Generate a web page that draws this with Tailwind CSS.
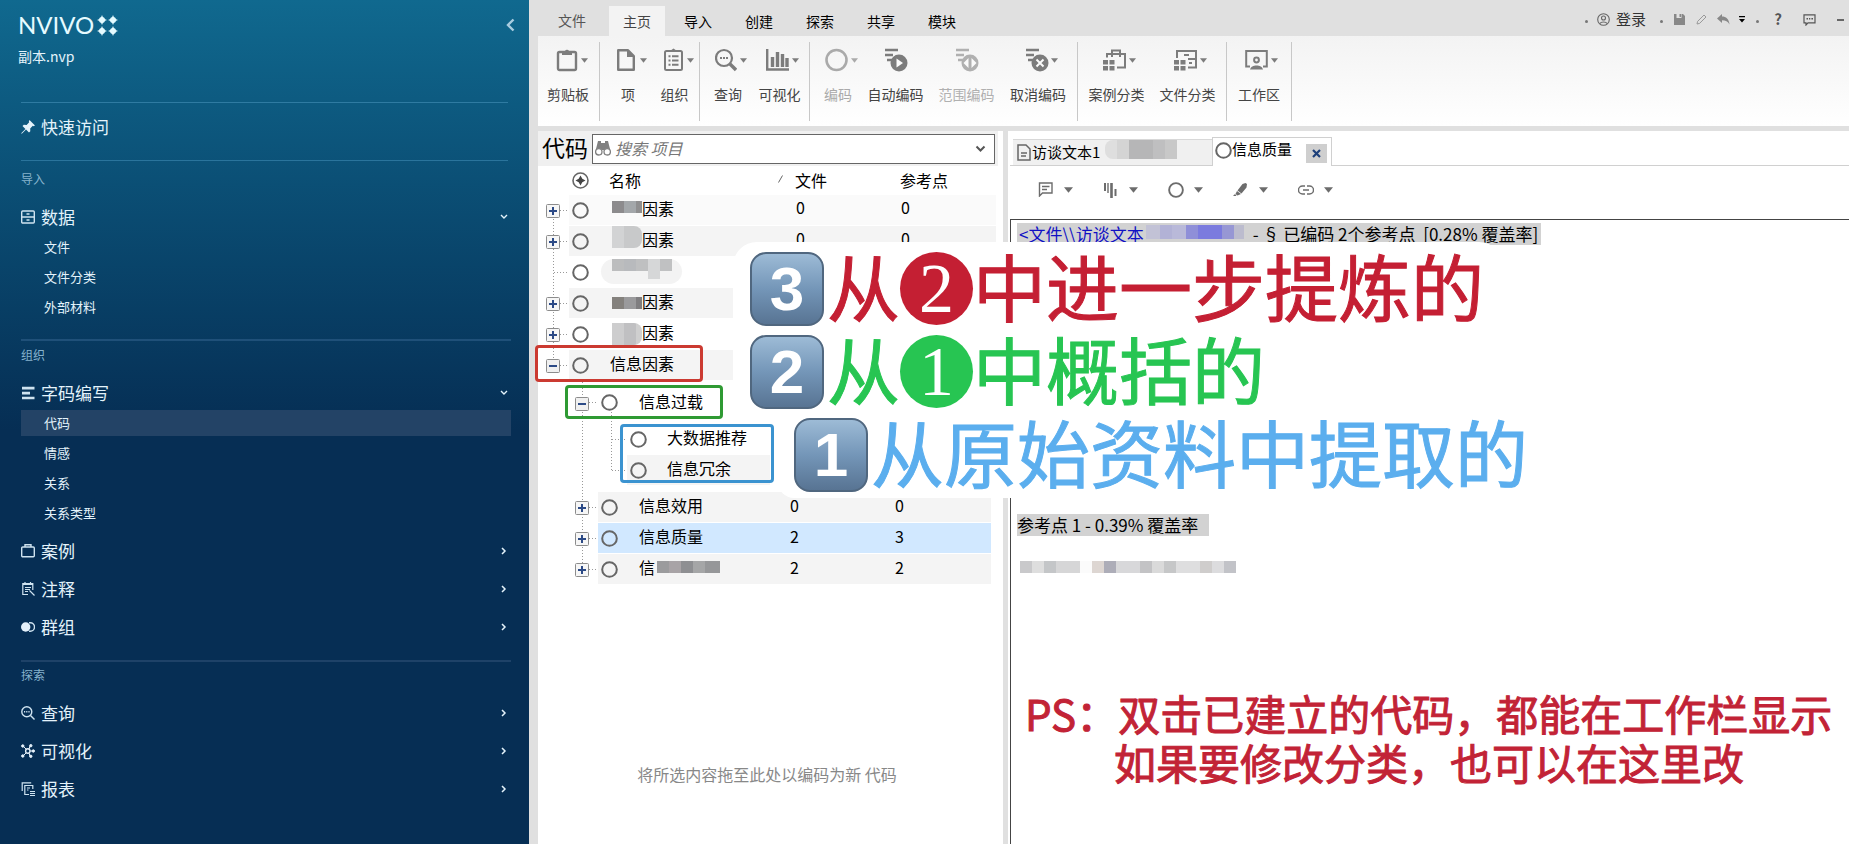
<!DOCTYPE html>
<html lang="zh-CN">
<head>
<meta charset="utf-8">
<title>NVivo - 副本.nvp</title>
<script src="https://cdn.jsdelivr.net/npm/@tailwindcss/browser@4"></script>
</head>
<body class="font-['Noto_Sans_CJK_SC',sans-serif] bg-white text-black">
<svg width="0" height="0" class="hidden">
  <symbol id="caret" viewBox="0 0 8 5"><path d="M0 0h8L4 5z" fill="currentColor"/></symbol>
  <symbol id="down" viewBox="0 0 8 6"><path d="M1 1l3 3 3-3" fill="none" stroke="currentColor" stroke-width="1.4"/></symbol>
  <symbol id="right" viewBox="0 0 6 8"><path d="M1 1l3 3-3 3" fill="none" stroke="currentColor" stroke-width="1.5"/></symbol>
  <symbol id="ring" viewBox="0 0 17 17"><circle cx="8.500" cy="8.500" r="7.300" fill="none" stroke="currentColor" stroke-width="2"/></symbol>
  <symbol id="plus" viewBox="0 0 14 14"><rect x=".5" y=".5" width="13" height="13" rx="1" fill="#f6f6f6" stroke="#8c8c8c"/><path d="M3 7h8M7 3v8" stroke="#2c4a86" stroke-width="2"/></symbol>
  <symbol id="minus" viewBox="0 0 14 14"><rect x=".5" y=".5" width="13" height="13" rx="1" fill="#f0f0f0" stroke="#8c8c8c"/><path d="M3 7h8" stroke="#2c4a86" stroke-width="2"/></symbol>
  <symbol id="lines" viewBox="0 0 24 24"><path d="M1 2h13M1 7h8M3 12h5" stroke="currentColor" stroke-width="2.600" fill="none"/></symbol>
</svg>

<div class="relative flex min-h-screen w-full overflow-hidden bg-[#e0e0e0]">

  <!-- Navigation -->
  <nav class="flex w-[529px] shrink-0 flex-col bg-linear-to-b from-[#10698f] to-[#062e54] to-[430px] pl-[21px] pr-[18px] text-[#e4f3fb]">
    <header class="flex h-[103px] items-start justify-between border-b border-[#2f7ba2] mr-[3px] pt-[13px]">
      <div class="-ml-[3px]">
        <div class="flex items-center gap-[3px] text-[24px] leading-[24px] text-[#e6fbff] font-['Lato',sans-serif]">NVIVO
          <svg width="21" height="21" viewBox="0 0 21 21" fill="#e6fbff"><g id="star"><path d="M5 0l1.500 3.500L10 5 6.500 6.500 5 10 3.500 6.500 0 5l3.500-1.500z"/></g><use href="#star" x="11"/><use href="#star" y="11"/><use href="#star" x="11" y="11"/><circle cx="5" cy="5" r="3"/><circle cx="16" cy="5" r="3"/><circle cx="5" cy="16" r="3"/><circle cx="16" cy="16" r="3"/></svg>
        </div>
        <div class="mt-[9px] text-[14px] leading-[20px]">副本.nvp</div>
      </div>
      <button aria-label="收起" class="mt-[5px] -mr-[7px] h-[14px] w-[9px]"><svg width="9" height="14" viewBox="0 0 9 14"><path d="M7.500 1.500L2 7l5.500 5.500" fill="none" stroke="#a9cde0" stroke-width="2.400"/></svg></button>
    </header>

    <div class="mr-[3px] flex h-[58px] items-start border-b border-[#2a749c] pt-[12px]">
      <a href="#" class="flex h-[24px] items-center gap-[6px] text-[17px]"><svg width="14" height="14" viewBox="0 0 14 14" fill="#e4f3fb"><path d="M8.500 0L14 5.500l-1.500.7-.7-.4-2.600 2.700.1 2.800-1.300 1.200L5 9.600.8 13.800l-.6-.6L4.400 9 1.500 6l1.300-1.200 2.800.1 2.600-2.600-.4-.8z"/></svg>快速访问</a>
    </div>

    <section class="h-[180px] border-b-2 border-[#1f5079]">
      <h2 class="pt-[9px] text-[12px] leading-[18px] text-[#86b3cd]">导入</h2>
      <a href="#" class="mt-[10px] flex h-[38px] items-center gap-[6px] text-[17px]"><svg width="14" height="14" viewBox="0 0 14 14" fill="none" stroke="#cfe3f0" stroke-width="1.400"><rect x=".7" y="1" width="12.600" height="12" rx="1"/><path d="M1 7h12M5.500 4h3M5.500 10h3"/></svg>数据<svg class="ml-auto mr-[3px]" width="8" height="6"><use href="#down"/></svg></a>
      <ul class="-mt-[4px] pl-[23px] text-[13px] leading-[30px]">
        <li><a href="#">文件</a></li><li><a href="#">文件分类</a></li><li><a href="#">外部材料</a></li>
      </ul>
    </section>

    <section class="h-[321px] border-b-2 border-[#1e4268]">
      <h2 class="pt-[5px] text-[12px] leading-[18px] text-[#86b3cd]">组织</h2>
      <a href="#" class="mt-[10px] flex h-[38px] items-center gap-[6px] text-[17px]"><svg width="14" height="14" viewBox="0 0 14 14" fill="#cfe3f0"><path d="M1 .8h12.500v2.600H1zM1 5.800h8v2.600H1zM1 10.800h12.500v2.400H1z"/></svg>字码编写<svg class="ml-auto mr-[3px]" width="8" height="6"><use href="#down"/></svg></a>
      <ul class="-mt-[4px] text-[13px] leading-[26px]">
        <li class="my-[2px] bg-[#234366] pl-[23px]"><a href="#" aria-current="page">代码</a></li>
        <li class="my-[4px] pl-[23px]"><a href="#">情感</a></li>
        <li class="my-[4px] pl-[23px]"><a href="#">关系</a></li>
        <li class="mt-[4px] pl-[23px]"><a href="#">关系类型</a></li>
      </ul>
      <a href="#" class="mt-[6px] flex h-[38px] items-center gap-[6px] text-[17px]"><svg width="14" height="14" viewBox="0 0 14 14" fill="none" stroke="#cfe3f0" stroke-width="1.400"><rect x=".7" y="3" width="12.600" height="9.800" rx="1"/><path d="M4 3V.8h6V3"/></svg>案例<svg class="ml-auto mr-[4px]" width="6" height="8"><use href="#right"/></svg></a>
      <a href="#" class="flex h-[38px] items-center gap-[6px] text-[17px]"><svg width="14" height="14" viewBox="0 0 14 14" fill="none" stroke="#cfe3f0" stroke-width="1.200"><path d="M7 12.500H1.800v-11h10V8M1.800 2.500h10M4 0v3M9.500 0v3M4 5.500h6M4 7.500h5M4 9.500h3M8.500 8.500l5 5"/></svg>注释<svg class="ml-auto mr-[4px]" width="6" height="8"><use href="#right"/></svg></a>
      <a href="#" class="flex h-[38px] items-center gap-[6px] text-[17px]"><svg width="14" height="14" viewBox="0 0 14 14"><circle cx="4.700" cy="7" r="4.700" fill="#e4f0fa"/><path d="M8 2.800h1.300a4.200 4.200 0 0 1 0 8.400H8" fill="none" stroke="#cfe3f0" stroke-width="1.400"/></svg>群组<svg class="ml-auto mr-[4px]" width="6" height="8"><use href="#right"/></svg></a>
    </section>

    <section>
      <h2 class="pt-[4px] text-[12px] leading-[18px] text-[#86b3cd]">探索</h2>
      <a href="#" class="mt-[10px] flex h-[38px] items-center gap-[6px] text-[17px]"><svg width="14" height="14" viewBox="0 0 14 14" fill="none" stroke="#cfe3f0" stroke-width="1.400"><circle cx="5.800" cy="5.800" r="5"/><path d="M9.500 9.500l4 4"/><path d="M3 5.800h1.200M5.200 5.800h1.200M7.400 5.800h1.200"/></svg>查询<svg class="ml-auto mr-[4px]" width="6" height="8"><use href="#right"/></svg></a>
      <a href="#" class="flex h-[38px] items-center gap-[6px] text-[17px]"><svg width="14" height="14" viewBox="0 0 14 14" fill="#e4f0fa" stroke="#e4f0fa"><path d="M2 2l3 3M9 2L8 5M12 7H9M2 12l3-3M9 12L8 9" /><circle cx="6.800" cy="7" r="2.200" fill="none" stroke-width="1.400"/><circle cx="1.800" cy="2" r="1.200"/><circle cx="9.800" cy="1.700" r="1.200"/><circle cx="12.300" cy="7" r="1.200"/><circle cx="1.800" cy="12" r="1.200"/><circle cx="9.800" cy="12.300" r="1.200"/></svg>可视化<svg class="ml-auto mr-[4px]" width="6" height="8"><use href="#right"/></svg></a>
      <a href="#" class="flex h-[38px] items-center gap-[6px] text-[17px]"><svg width="14" height="14" viewBox="0 0 14 14" fill="none" stroke="#cfe3f0" stroke-width="1.200"><path d="M1.200 9V.8h9M8 12.500H3.800v-9h8V7M6 6h3M6 8h1.500M9 9.500h5M9 11.500h5M9 13.500h5"/></svg>报表<svg class="ml-auto mr-[4px]" width="6" height="8"><use href="#right"/></svg></a>
    </section>
  </nav>

  <div class="flex min-w-0 flex-1 flex-col pl-[9px]">
    <!-- Tab strip -->
    <header class="flex h-[36px] items-end text-[14px]">
      <button class="h-[30px] w-[68px] pb-[2px] text-[#555]">文件</button>
      <button class="ml-[3px] h-[30px] w-[56px] bg-[#f3f3f3] text-[#444]">主页</button>
      <button class="h-[30px] w-[66px]">导入</button>
      <button class="h-[30px] w-[56px]">创建</button>
      <button class="ml-[5px] h-[30px] w-[56px]">探索</button>
      <button class="ml-[5px] h-[30px] w-[56px]">共享</button>
      <button class="ml-[5px] h-[30px] w-[56px]">模块</button>
      <div class="ml-auto flex h-[30px] items-center pr-[5px] pb-[3px] text-[#777]">
        <span class="mt-[3px] size-[3px] rounded-full bg-[#777]"></span>
        <button class="ml-[9px] flex items-center gap-[6px] text-[15px] text-[#333]"><svg width="13" height="13" viewBox="0 0 13 13" fill="none" stroke="#666" stroke-width="1.100"><circle cx="6.500" cy="6.500" r="5.800"/><circle cx="6.500" cy="5" r="2"/><path d="M3 10.500c1-2 6-2 7 0"/></svg>登录</button>
        <span class="mt-[3px] ml-[14px] size-[3px] rounded-full bg-[#777]"></span>
        <button aria-label="保存" class="ml-[11px]"><svg width="11" height="11" viewBox="0 0 11 11" fill="#888"><path d="M0 0h2.500v4h5V0H9l2 2v9H0zM5.500 0h1.500v3H5.500z"/></svg></button>
        <button aria-label="编辑" class="ml-[11px]"><svg width="11" height="11" viewBox="0 0 11 11" fill="none" stroke="#999"><path d="M1 10l.6-2.600L8 1l2 2-6.400 6.400z"/></svg></button>
        <button aria-label="撤销" class="ml-[10px]"><svg width="13" height="11" viewBox="0 0 13 11" fill="#888"><path d="M5 0v2.600c4 0 7 2.400 7.500 8C11 7.500 8.500 6.300 5 6.300V9L0 4.500z"/></svg></button>
        <button aria-label="更多" class="ml-[9px]"><svg width="6" height="7" viewBox="0 0 6 7"><path d="M0 0h6v1.300H0zM0 3h6L3 6.500z" fill="#000"/></svg></button>
        <span class="mt-[3px] ml-[11px] size-[3px] rounded-full bg-[#777]"></span>
        <button class="ml-[14px] w-[10px] text-[15px] font-bold text-[#555]">?</button>
        <button aria-label="反馈" class="ml-[20px]"><svg width="13" height="12" viewBox="0 0 13 12" fill="none" stroke="#555" stroke-width="1.200"><path d="M1 .8h11v8H5L3 11V8.800H1z"/><path d="M3.500 4.800H5M6 4.800h1.300M8.400 4.800H10" stroke-width="1.600"/></svg></button>
        <button aria-label="最小化" class="ml-[21px] h-[2px] w-[7px] bg-[#666]"></button>
      </div>
    </header>

    <!-- Ribbon -->
    <div class="flex h-[90px] bg-linear-to-b from-[#f3f3f3] to-white pt-[6px] pb-[5px] text-[14px] leading-[20px] text-[#444]">
      <div class="flex border-r border-[#c8c8c8] pr-px">
        <button class="flex w-[60px] flex-col items-center pt-[6px]"><span class="flex h-[24px] items-center gap-[3px] pl-[8px] text-[#7c7c7c]"><svg width="22" height="24" viewBox="0 0 22 24"><rect x="2" y="4" width="18" height="18" rx="1.500" fill="none" stroke="currentColor" stroke-width="2.400"/><path d="M6 3h3a2.200 2.200 0 0 1 4 0h3v4H6z" fill="currentColor"/></svg><svg width="7" height="5"><use href="#caret"/></svg></span><span class="mt-[12px]">剪贴板</span></button>
      </div>
      <div class="flex border-r border-[#c8c8c8] pl-[6px]">
        <button class="flex w-[44px] flex-col items-center pt-[6px]"><span class="flex h-[24px] items-center gap-[5px] pl-[8px] text-[#7c7c7c]"><svg width="18" height="24" viewBox="0 0 18 24"><path d="M1.200 2.200h9.600l6 6v13.600H1.200z" fill="none" stroke="currentColor" stroke-width="2.400" stroke-linejoin="round"/><path d="M10 2l7 7h-7z" fill="currentColor"/></svg><svg width="7" height="5"><use href="#caret"/></svg></span><span class="mt-[12px]">项</span></button>
        <button class="flex w-[49px] flex-col items-center pt-[6px]"><span class="flex h-[24px] items-center gap-[4px] pl-[8px] text-[#7c7c7c]"><svg width="19" height="24" viewBox="0 0 19 24"><rect x="1" y="3" width="17" height="19" rx="1.500" fill="none" stroke="currentColor" stroke-width="2"/><path d="M6 3l3.500-2.500L13 3z" fill="currentColor"/><path d="M4.500 8.200h2M8 8.200h6.500M4.500 12.500h2M8 12.500h6.500M4.500 16.800h2M8 16.800h6.500" stroke="currentColor" stroke-width="2"/></svg><svg width="7" height="5"><use href="#caret"/></svg></span><span class="mt-[12px]">组织</span></button>
      </div>
      <div class="flex border-r border-[#c8c8c8] pl-[6px]">
        <button class="flex w-[44px] flex-col items-center pt-[6px]"><span class="flex h-[24px] items-center gap-[3px] pl-[6px] text-[#7c7c7c]"><svg width="22" height="24" viewBox="0 0 22 24"><circle cx="9" cy="10" r="8" fill="none" stroke="currentColor" stroke-width="2.200"/><path d="M15 16l6 6" stroke="currentColor" stroke-width="3.400"/><path d="M5 10h2M8 10h2M11 10h2" stroke="currentColor" stroke-width="2"/></svg><svg width="7" height="5"><use href="#caret"/></svg></span><span class="mt-[12px]">查询</span></button>
        <button class="flex w-[59px] flex-col items-center pt-[6px]"><span class="flex h-[24px] items-center gap-[3px] pl-[6px] text-[#7c7c7c]"><svg width="23" height="24" viewBox="0 0 23 24"><path d="M1.200 1v20.500H23" fill="none" stroke="currentColor" stroke-width="2.400"/><path d="M6.500 9v10M11.500 4v15M16.500 6v13M21 10v9" stroke="currentColor" stroke-width="3.400"/></svg><svg width="7" height="5"><use href="#caret"/></svg></span><span class="mt-[12px]">可视化</span></button>
      </div>
      <div class="flex border-r border-[#c8c8c8] pl-[6px] pr-[3px]">
        <button class="flex w-[44px] flex-col items-center pt-[6px] text-[#aaa]" disabled><span class="flex h-[24px] items-center gap-[3px] pl-[6px]"><svg width="23" height="24" viewBox="0 0 23 24"><circle cx="11.500" cy="12" r="10" fill="none" stroke="currentColor" stroke-width="2.600"/></svg><svg width="7" height="5"><use href="#caret"/></svg></span><span class="mt-[12px]">编码</span></button>
        <button class="flex w-[71px] flex-col items-center pt-[6px]"><span class="flex h-[24px] items-center text-[#7c7c7c]"><svg width="24" height="24" viewBox="0 0 24 24"><use href="#lines"/><circle cx="15" cy="15" r="8.500" fill="currentColor"/><path d="M12.500 10.500v9l6.500-4.500z" fill="#fafafa"/></svg></span><span class="mt-[12px]">自动编码</span></button>
        <button class="flex w-[71px] flex-col items-center pt-[6px] text-[#b0b0b0]" disabled><span class="flex h-[24px] items-center"><svg width="24" height="24" viewBox="0 0 24 24"><use href="#lines"/><circle cx="15" cy="15" r="8.500" fill="currentColor"/><path d="M13.500 10v10l-5-5zM16.500 10v10l5-5z" fill="#fafafa"/></svg></span><span class="mt-[12px]">范围编码</span></button>
        <button class="flex w-[72px] flex-col items-center pt-[6px]"><span class="flex h-[24px] items-center gap-[2px] pl-[6px] text-[#7c7c7c]"><svg width="24" height="24" viewBox="0 0 24 24"><use href="#lines"/><circle cx="15" cy="15" r="8.500" fill="currentColor"/><path d="M11.500 11.500l7 7M18.500 11.500l-7 7" stroke="#fafafa" stroke-width="2"/></svg><svg width="7" height="5"><use href="#caret"/></svg></span><span class="mt-[12px]">取消编码</span></button>
      </div>
      <div class="flex border-r border-[#c8c8c8] px-[3px]">
        <button class="flex w-[71px] flex-col items-center pt-[6px]"><span class="flex h-[24px] items-center gap-[3px] pl-[6px] text-[#7c7c7c]"><svg width="23" height="24" viewBox="0 0 23 24"><path d="M4 9.500V6h18v13.500h-8M9 6V2.500h8V6M9 6v3M17 6v3" fill="none" stroke="currentColor" stroke-width="2"/><path d="M0 12h5v4.500H0zM6.500 12h5v4.500h-5zM0 18h5v4.500H0zM6.500 18h5v4.500h-5z" fill="currentColor"/></svg><svg width="7" height="5"><use href="#caret"/></svg></span><span class="mt-[12px]">案例分类</span></button>
        <button class="flex w-[71px] flex-col items-center pt-[6px]"><span class="flex h-[24px] items-center gap-[3px] pl-[6px] text-[#7c7c7c]"><svg width="23" height="24" viewBox="0 0 23 24"><path d="M3 10V3h19v16.500h-8M14 11h8M10 7h5M15 15h3" fill="none" stroke="currentColor" stroke-width="2"/><path d="M0 12h5v4.500H0zM6.500 12h5v4.500h-5zM0 18h5v4.500H0zM6.500 18h5v4.500h-5z" fill="currentColor"/></svg><svg width="7" height="5"><use href="#caret"/></svg></span><span class="mt-[12px]">文件分类</span></button>
      </div>
      <div class="flex border-r border-[#c8c8c8]">
        <button class="flex w-[64px] flex-col items-center pt-[6px]"><span class="flex h-[24px] items-center gap-[3px] pl-[4px] text-[#7c7c7c]"><svg width="23" height="24" viewBox="0 0 23 24"><path d="M5 18.500H1.200V3h20.600v15.500H18" fill="none" stroke="currentColor" stroke-width="2"/><circle cx="11.500" cy="12" r="2.400" fill="none" stroke="currentColor" stroke-width="2"/><path d="M5 21.500c1-5.500 12-5.500 13 0z" fill="currentColor"/></svg><svg width="7" height="5"><use href="#caret"/></svg></span><span class="mt-[12px]">工作区</span></button>
      </div>
    </div>

    <div class="mt-[5px] flex flex-1">
      <!-- Codes list -->
      <main class="flex w-[465px] shrink-0 flex-col bg-white">
        <div class="mr-[5px] flex h-[35px] items-center bg-[#f0f0f0] pl-[4px]">
          <h1 class="pb-[4px] text-[23px] leading-[30px]">代码</h1>
          <div class="ml-[4px] flex h-[30px] flex-1 items-center border border-[#666] bg-white pl-[2px] pr-[8px] mr-[3px]">
            <svg width="16" height="15" viewBox="0 0 16 15" fill="#808080"><path d="M3 0h3v2h4V0h3l2 8v1H1V8z"/><circle cx="3.800" cy="10.800" r="3.200" fill="#fff" stroke="#808080" stroke-width="1.300"/><circle cx="12.200" cy="10.800" r="3.200" fill="#fff" stroke="#808080" stroke-width="1.300"/></svg>
            <input type="text" aria-label="搜索 项目" placeholder="搜索 项目" class="ml-[4px] mb-[2px] min-w-0 flex-1 bg-transparent text-[16px] italic outline-none placeholder:text-[#777]">
            <button aria-label="展开"><svg width="11" height="8" viewBox="0 0 11 8"><path d="M1.500 1.500l4 4 4-4" fill="none" stroke="#555" stroke-width="2"/></svg></button>
          </div>
        </div>

        <div class="relative">
          <svg class="absolute top-0 left-0" width="100" height="420" fill="none" stroke="#999" stroke-dasharray="1 2"><path d="M15.500 44v156M22 44.500h9M22 75.500h9M16 106.500h15M22 137.500h9M22 168.500h9M22 199.500h9M44.500 216v188M51 236.500h9M51 341.500h9M51 372.500h9M51 403.500h9M73.500 246v59M74 273.500h15M74 304.500h15"/></svg>
          <table class="relative w-[458px] table-fixed border-collapse text-left text-[16px] leading-[24px]">
            <colgroup><col class="w-[252px]"><col class="w-[105px]"><col></colgroup>
            <thead><tr class="h-[29px] align-middle">
              <th class="font-normal p-0"><div class="flex items-center pl-[34px]"><svg width="17" height="17" viewBox="0 0 17 17"><circle cx="8.500" cy="8.500" r="7.500" fill="none" stroke="#666" stroke-width="1.600"/><path d="M8.500 3.500L10.300 6.700 13.500 8.500 10.300 10.300 8.500 13.500 6.700 10.300 3.500 8.500 6.700 6.700z" fill="#444"/></svg><span class="ml-[20px] mb-[2px]">名称</span><svg class="ml-auto mb-[4px] mr-[7px]" width="5" height="8" viewBox="0 0 5 8"><path d="M.5 7.500l4-7" stroke="#666"/></svg></div></th>
              <th class="font-normal p-0 pb-[2px] pl-[5px]">文件</th>
              <th class="font-normal p-0 pb-[2px] pl-[5px]">参考点</th>
            </tr></thead>
            <tbody>
              <tr class="h-[31px]"><td class="p-0 pb-px"><div class="flex h-[30px]"><button aria-label="展开" class="ml-[8px] mr-[9px] mt-[2px]"><svg width="14" height="14"><use href="#plus"/></svg></button><div class="flex flex-1 items-center bg-[#fafafa] pl-[3px]"><svg width="17" height="17" class="text-[#666]"><use href="#ring"/></svg><span class="ml-[23px] mb-[6px] flex h-[12px]"><i class="w-[12px] bg-[#8c8b8d]"></i><i class="w-[12px] bg-[#a3a7aa]"></i><i class="w-[6px] bg-[#8f8f90]"></i></span><span class="mb-[4px]">因素</span></div></div></td><td class="p-0 pb-px"><div class="h-[30px] bg-[#fafafa] pl-[6px]">0</div></td><td class="p-0 pb-px"><div class="h-[30px] bg-[#fafafa] pl-[6px]">0</div></td></tr>
              <tr class="h-[31px]"><td class="p-0 pb-px"><div class="flex h-[30px]"><button aria-label="展开" class="ml-[8px] mr-[9px] mt-[2px]"><svg width="14" height="14"><use href="#plus"/></svg></button><div class="flex flex-1 items-center bg-[#f4f4f4] pl-[3px]"><svg width="17" height="17" class="text-[#666]"><use href="#ring"/></svg><span class="ml-[23px] mb-[8px] flex h-[22px] overflow-hidden rounded-r-lg"><i class="w-[12px] bg-[#d2d3d4]"></i><i class="w-[18px] bg-[#c8c9ca]"></i></span><span class="mb-[4px]">因素</span></div></div></td><td class="p-0 pb-px"><div class="h-[30px] bg-[#f4f4f4] pl-[6px]">0</div></td><td class="p-0 pb-px"><div class="h-[30px] bg-[#f4f4f4] pl-[6px]">0</div></td></tr>
              <tr class="h-[31px]"><td class="p-0 pb-px"><div class="flex h-[30px]"><div class="flex flex-1 items-center pl-[34px]"><svg width="17" height="17" class="text-[#666]"><use href="#ring"/></svg><span class="ml-[12px] mb-[2px] flex h-[25px] items-start rounded-full bg-[#f3f3f3] pr-[10px] pl-[11px]"><i class="h-[12px] w-[12px] bg-[#bcbdbe]"></i><i class="h-[12px] w-[12px] bg-[#b8babd]"></i><i class="h-[12px] w-[12px] bg-[#bfc0c1]"></i><i class="h-[20px] w-[12px] bg-[#d6d7d8]"></i><i class="h-[12px] w-[12px] bg-[#c0c1c2]"></i></span></div></div></td><td class="p-0"></td><td class="p-0"></td></tr>
              <tr class="h-[31px]"><td class="p-0 pb-px"><div class="flex h-[30px]"><button aria-label="展开" class="ml-[8px] mr-[9px] mt-[2px]"><svg width="14" height="14"><use href="#plus"/></svg></button><div class="flex flex-1 items-center bg-[#f4f4f4] pl-[3px]"><svg width="17" height="17" class="text-[#666]"><use href="#ring"/></svg><span class="ml-[23px] flex h-[12px]"><i class="w-[12px] bg-[#84817d]"></i><i class="w-[12px] bg-[#9a9a9c]"></i><i class="w-[6px] bg-[#7f7e80]"></i></span><span class="mb-[4px]">因素</span></div></div></td><td class="p-0"></td><td class="p-0"></td></tr>
              <tr class="h-[31px]"><td class="p-0 pb-px"><div class="flex h-[30px]"><button aria-label="展开" class="ml-[8px] mr-[9px] mt-[2px]"><svg width="14" height="14"><use href="#plus"/></svg></button><div class="flex flex-1 items-center pl-[3px]"><svg width="17" height="17" class="text-[#666]"><use href="#ring"/></svg><span class="ml-[23px] flex h-[22px] overflow-hidden rounded-r-lg"><i class="w-[12px] bg-[#cdcdce]"></i><i class="w-[12px] bg-[#c0c0c2]"></i><i class="w-[6px] bg-[#cfcfcf]"></i></span><span class="mb-[4px]">因素</span></div></div></td><td class="p-0"></td><td class="p-0"></td></tr>
              <tr class="h-[31px]"><td class="p-0 pb-px"><div class="flex h-[30px]"><button aria-label="折叠" class="ml-[8px] mr-[9px] mt-[2px]"><svg width="14" height="14"><use href="#minus"/></svg></button><div class="flex flex-1 items-center bg-[#f4f4f4] pl-[3px]"><svg width="17" height="17" class="text-[#666]"><use href="#ring"/></svg><span class="ml-[21px] mb-[4px]">信息因素</span></div></div></td><td class="p-0"></td><td class="p-0"></td></tr>
              <tr class="h-[43px]"><td class="p-0"><div class="flex h-[30px] pl-[29px]"><button aria-label="折叠" class="ml-[8px] mr-[9px] mt-[2px]"><svg width="14" height="14"><use href="#minus"/></svg></button><div class="flex flex-1 items-center pl-[3px]"><svg width="17" height="17" class="text-[#666]"><use href="#ring"/></svg><span class="ml-[21px] mb-[4px]">信息过载</span></div></div></td><td class="p-0"></td><td class="p-0"></td></tr>
              <tr class="h-[31px]"><td class="p-0 pb-px"><div class="flex h-[30px] pl-[89px]"><div class="flex flex-1 items-center pl-[3px]"><svg width="17" height="17" class="text-[#666]"><use href="#ring"/></svg><span class="ml-[20px] mb-[4px]">大数据推荐</span></div></div></td><td class="p-0"></td><td class="p-0"></td></tr>
              <tr class="h-[31px]"><td class="p-0 pb-px"><div class="mr-[20px] flex h-[30px] pl-[89px]"><div class="flex flex-1 items-center bg-[#f4f4f4] pl-[3px]"><svg width="17" height="17" class="text-[#666]"><use href="#ring"/></svg><span class="ml-[20px] mb-[4px]">信息冗余</span></div></div></td><td class="p-0"></td><td class="p-0"></td></tr>
              <tr class="h-[37px]"><td class="p-0 pt-[6px] pb-px"><div class="flex h-[30px] pl-[29px]"><button aria-label="展开" class="ml-[8px] mr-[9px] mt-[2px]"><svg width="14" height="14"><use href="#plus"/></svg></button><div class="flex flex-1 items-center bg-[#f4f4f4] pl-[3px]"><svg width="17" height="17" class="text-[#666]"><use href="#ring"/></svg><span class="ml-[21px] mb-[4px]">信息效用</span></div></div></td><td class="p-0 pt-[6px] pb-px"><div class="h-[30px] bg-[#f4f4f4] pt-px">0</div></td><td class="p-0 pt-[6px] pb-px pr-[5px]"><div class="h-[30px] bg-[#f4f4f4] pt-px">0</div></td></tr>
              <tr class="h-[31px]"><td class="p-0 pb-px"><div class="flex h-[30px] pl-[29px]"><button aria-label="展开" class="ml-[8px] mr-[9px] mt-[2px]"><svg width="14" height="14"><use href="#plus"/></svg></button><div class="flex flex-1 items-center bg-[#d1e8ff] pl-[3px]"><svg width="17" height="17" class="text-[#666]"><use href="#ring"/></svg><span class="ml-[21px] mb-[4px]">信息质量</span></div></div></td><td class="p-0 pb-px"><div class="h-[30px] bg-[#d1e8ff] pt-px">2</div></td><td class="p-0 pb-px pr-[5px]"><div class="h-[30px] bg-[#d1e8ff] pt-px">3</div></td></tr>
              <tr class="h-[31px]"><td class="p-0 pb-px"><div class="flex h-[30px] pl-[29px]"><button aria-label="展开" class="ml-[8px] mr-[9px] mt-[2px]"><svg width="14" height="14"><use href="#plus"/></svg></button><div class="flex flex-1 items-center bg-[#f4f4f4] pl-[3px]"><svg width="17" height="17" class="text-[#666]"><use href="#ring"/></svg><span class="ml-[21px] mb-[4px]">信</span><span class="mb-[4px] ml-[2px] flex h-[12px]"><i class="w-[12px] bg-[#9b9b9d]"></i><i class="w-[12px] bg-[#a8a3a6]"></i><i class="w-[12px] bg-[#8e8f92]"></i><i class="w-[12px] bg-[#a5a6a7]"></i><i class="w-[15px] bg-[#969799]"></i></span></div></div></td><td class="p-0 pb-px"><div class="h-[30px] bg-[#f4f4f4] pt-px">2</div></td><td class="p-0 pb-px pr-[5px]"><div class="h-[30px] bg-[#f4f4f4] pt-px">2</div></td></tr>
            </tbody>
          </table>
        </div>
        <p class="mt-auto pr-[7px] pb-[58px] text-center text-[16px] leading-[24px] text-[#888]">将所选内容拖至此处以编码为新 代码</p>
      </main>

      <div class="w-[5px] shrink-0"></div>

      <!-- Detail view -->
      <section class="flex min-w-0 flex-1 flex-col bg-white pl-[2px]">
        <div class="flex h-[35px] items-end border-b border-[#d0d0d0] pl-[3px] text-[15px] leading-[22px]">
          <button class="flex h-[26px] w-[199px] items-center border-t border-[#d8d8d8] bg-[#f0f0f0] pl-[4px]"><svg width="14" height="17" viewBox="0 0 14 17" fill="none" stroke="#666" stroke-width="1.500"><path d="M1 1h8l4 4v11H1z"/><path d="M4 9h6M4 12h5"/></svg><span class="ml-px mb-[2px]">访谈文本1</span><span class="ml-[5px] mb-[6px] flex h-[19px] overflow-hidden rounded-l-lg bg-[#ececec]"><i class="w-[12px] bg-[#dedede]"></i><i class="w-[12px] bg-[#d4d4d4]"></i><i class="w-[24px] bg-[#b6b6b7]"></i><i class="w-[12px] bg-[#bfbfc0]"></i><i class="w-[12px] bg-[#c8c8c8]"></i></span></button>
          <div class="-mb-px flex h-[29px] w-[120px] items-center border border-b-0 border-[#d0d0d0] bg-white pl-[2px] pr-[4px]"><svg width="17" height="17" class="mb-[4px] text-[#666]"><use href="#ring"/></svg><button class="mb-[6px]">信息质量</button><button aria-label="关闭" class="ml-auto mt-[2px] flex h-[19px] w-[21px] items-center justify-center bg-[#cfcfcf]"><svg width="9" height="9" viewBox="0 0 9 9"><path d="M1 1l7 7M8 1L1 8" stroke="#1d3f7a" stroke-width="2.200"/></svg></button></div>
        </div>
        <div class="flex h-[53px] items-center gap-[30px] pb-[6px] pl-[28px] text-[#6c6c6c]">
          <button aria-label="批注" class="flex w-[35px] items-center justify-between"><svg width="15" height="15" viewBox="0 0 15 15" fill="none" stroke="currentColor" stroke-width="1.400"><path d="M1.500 14V1h12.500v10H4.500z"/><path d="M4 4.500h7.500M4 7.500h5"/></svg><svg width="9" height="6"><use href="#caret"/></svg></button>
          <button aria-label="编码带" class="flex w-[35px] items-center justify-between"><svg width="15" height="16" viewBox="0 0 15 16" stroke="currentColor" fill="none"><path d="M2 1v8M12.500 7v7" stroke-width="2"/><path d="M5 1v10" stroke-width="1.400"/><path d="M8.500 1v15" stroke-width="2.600"/></svg><svg width="9" height="6"><use href="#caret"/></svg></button>
          <button aria-label="编码" class="flex w-[35px] items-center justify-between"><svg width="16" height="16"><use href="#ring"/></svg><svg width="9" height="6"><use href="#caret"/></svg></button>
          <button aria-label="突出显示" class="flex w-[35px] items-center justify-between"><svg width="15" height="14" viewBox="0 0 15 14" fill="currentColor"><path d="M9.500 1l3-1 1.500 1-.5 3.500-5 6-4-3zM4 8l4 3-3.500 1.500L2.500 11zM0 13l2-2 1.500 2z"/></svg><svg width="9" height="6"><use href="#caret"/></svg></button>
          <button aria-label="链接" class="flex w-[35px] items-center justify-between"><svg width="16" height="10" viewBox="0 0 16 10" fill="none" stroke="currentColor" stroke-width="1.400"><path d="M7 1H4.500a3.800 3.800 0 0 0 0 8H7M9 1h2.500a3.800 3.800 0 0 1 0 8H9M5 5h6"/></svg><svg width="9" height="6"><use href="#caret"/></svg></button>
        </div>
        <div class="flex-1 border-t border-l border-[#444] pl-[6px] pt-[3px] text-[17px] leading-[22px]">
          <div class="flex w-[524px] items-center bg-[#d2d2d2] pl-[2px] whitespace-pre"><a href="#" class="text-[#1010c4]">&lt;文件\\访谈文本</a><span class="ml-[2px] mb-[4px] flex h-[14px] w-[98px]"><i class="w-[14px] bg-[#c2c2d6]"></i><i class="w-[12px] bg-[#b2b2d6]"></i><i class="w-[14px] bg-[#b9b9d9]"></i><i class="w-[12px] bg-[#8f8fd8]"></i><i class="w-[24px] bg-[#7b7bde]"></i><i class="w-[12px] bg-[#9797d4]"></i><i class="w-[10px] bg-[#bcbcce]"></i></span><span class="ml-[9px]">- § 已编码 2个参考点  [0.28% 覆盖率]</span></div>
          <div class="mt-[269px] w-[192px] bg-[#d2d2d2]">参考点 1 - 0.39% 覆盖率</div>
          <div class="mt-[25px] ml-[3px] flex h-[24px] items-start">
            <i class="h-[12px] w-[12px] bg-[#c9c9cb]"></i><i class="h-[12px] w-[12px] bg-[#dedede]"></i><i class="h-[12px] w-[12px] bg-[#c4c6c8]"></i><i class="h-[12px] w-[24px] bg-[#d6d6d7]"></i><i class="h-[12px] w-[12px] bg-[#fbfbfb]"></i><i class="h-[12px] w-[12px] bg-[#ddd6d2]"></i><i class="h-[12px] w-[12px] bg-[#adadb8]"></i><i class="h-[12px] w-[24px] bg-[#d8d8da]"></i><i class="h-[12px] w-[12px] bg-[#c3c3c5]"></i><i class="h-[12px] w-[12px] bg-[#dadada]"></i><i class="h-[12px] w-[12px] bg-[#c6c7c8]"></i><i class="h-[12px] w-[24px] bg-[#dededf]"></i><i class="h-[12px] w-[12px] bg-[#cfcdcc]"></i><i class="h-[12px] w-[12px] bg-[#dcdcde]"></i><i class="h-[12px] w-[12px] bg-[#c2c3c8]"></i>
          </div>
        </div>
      </section>
    </div>
  </div>

  <!-- Annotations drawn over the window -->
  <div class="absolute top-[242px] left-[733px] h-[182px] w-[770px] rounded-3xl bg-white"></div>
  <div class="absolute top-[400px] left-[778px] h-[98px] w-[770px] rounded-b-2xl bg-white"></div>
  <div class="absolute top-[345px] left-[535px] h-[37px] w-[168px] rounded-sm border-3 border-[#cb3a31]"></div>
  <div class="absolute top-[385px] left-[565px] h-[34px] w-[158px] rounded-sm border-3 border-[#2f9a33]"></div>
  <div class="absolute top-[424px] left-[620px] h-[59px] w-[154px] rounded-sm border-3 border-[#3b93d0]"></div>

  <div class="absolute top-[247px] left-[750px] flex flex-col text-[73px] leading-[83px] whitespace-nowrap">
    <p class="flex h-[83px] items-center text-[#c41f33]"><span class="mr-[3px] flex size-[74px] items-center justify-center rounded-[16px] border-2 border-[#50677f] bg-linear-to-b from-[#9dbbd6] via-[#7496b8] to-[#587493] text-[62px] font-bold text-white font-['Liberation_Sans',sans-serif]">3</span><span class="pb-[8px] [-webkit-text-stroke:1px]">从</span><span class="flex size-[73px] items-center justify-center rounded-full bg-[#c41f33] text-[70px] text-white font-['Liberation_Serif',serif]">2</span><span class="pb-[8px] [-webkit-text-stroke:1px]">中进一步提炼的</span></p>
    <p class="flex h-[83px] items-center text-[#27c552]"><span class="mr-[3px] flex size-[74px] items-center justify-center rounded-[16px] border-2 border-[#50677f] bg-linear-to-b from-[#9dbbd6] via-[#7496b8] to-[#587493] text-[62px] font-bold text-white font-['Liberation_Sans',sans-serif]">2</span><span class="pb-[8px] [-webkit-text-stroke:1px]">从</span><span class="flex size-[73px] items-center justify-center rounded-full bg-[#27c552] text-[70px] text-white font-['Liberation_Serif',serif]">1</span><span class="pb-[8px] [-webkit-text-stroke:1px]">中概括的</span></p>
    <p class="flex h-[83px] items-center pl-[44px] text-[#5baeee]"><span class="mr-[3px] flex size-[74px] items-center justify-center rounded-[16px] border-2 border-[#50677f] bg-linear-to-b from-[#9dbbd6] via-[#7496b8] to-[#587493] text-[62px] font-bold text-white font-['Liberation_Sans',sans-serif]">1</span><span class="pb-[8px] [-webkit-text-stroke:1px]">从原始资料中提取的</span></p>
  </div>

  <div class="absolute top-[688px] left-[1025px] text-[42px] leading-[49px] whitespace-nowrap text-[#c22336] [-webkit-text-stroke:1px]">
    <p>PS：双击已建立的代码，都能在工作栏显示</p>
    <p class="pl-[89px]">如果要修改分类，也可以在这里改</p>
  </div>
</div>
</body>
</html>
